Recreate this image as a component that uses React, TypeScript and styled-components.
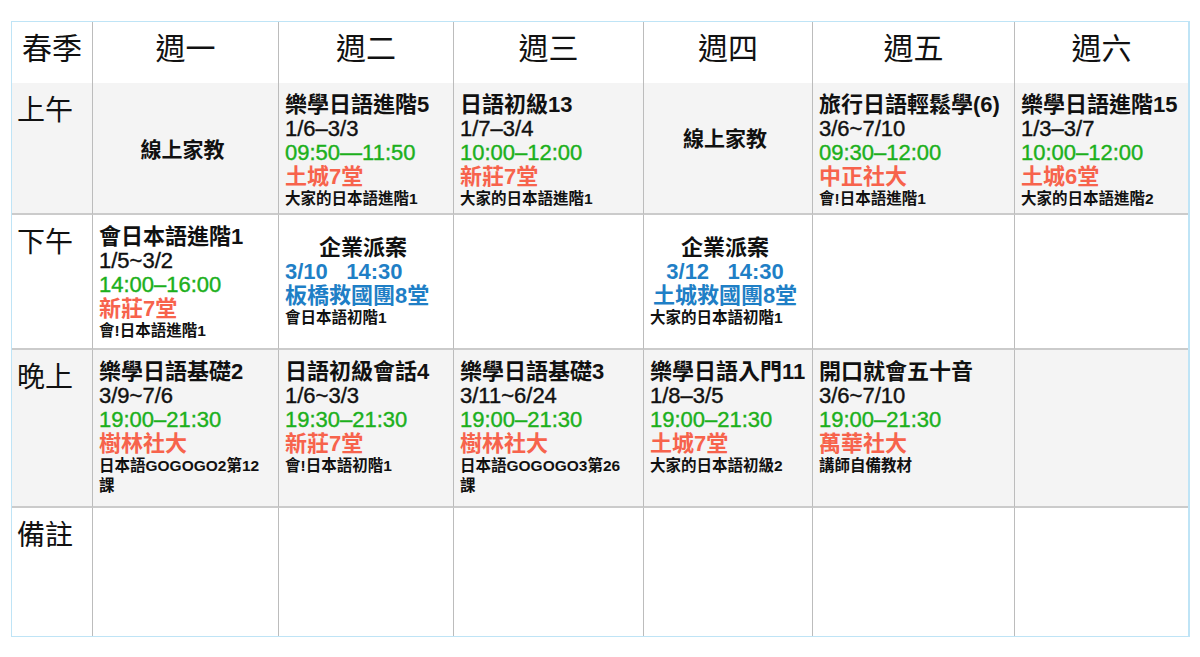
import styled, { createGlobalStyle } from "styled-components";

const GlobalStyle = createGlobalStyle`
  body {
    margin: 0;
    background: #fff;
    color: #111;
    font-family: "Liberation Sans", "Noto Sans CJK TC", sans-serif;
  }
`;

const Page = styled.div`
  padding: 21px 13px 0 11px;
`;

const Table = styled.table`
  table-layout: fixed;
  border-collapse: separate;
  border-spacing: 0;
  width: 1176px;
  border: 1px solid #bfe4f6;
  border-right-width: 2px;
`;

const Row = styled.tr<{ $shade?: boolean; $h: number }>`
  height: ${(p) => p.$h}px;
  background: ${(p) => (p.$shade ? "#f4f4f4" : "#fff")};
  &:last-child > * {
    border-bottom: 0;
  }
`;

const BaseCell = styled.td`
  padding: 0;
  border-right: 1px solid #bcbcbc;
  border-bottom: 2px solid #cbcbcb;
  &:last-child {
    border-right: 0;
  }
`;

const HeadCell = styled(BaseCell).attrs({ as: "th" })`
  font-size: 30px;
  line-height: 36px;
  font-weight: 400;
  text-align: center;
  vertical-align: middle;
  padding-bottom: 8px;
`;

const LabelCell = styled(BaseCell)`
  font-size: 28px;
  line-height: 36px;
  vertical-align: top;
  padding: 10px 0 0 5px;
`;

const Cell = styled(BaseCell)<{ $middle?: boolean; $lift?: number }>`
  vertical-align: ${(p) => (p.$middle ? "middle" : "top")};
  padding: ${(p) => (p.$middle ? `0 12px ${p.$lift ?? 0}px 6px` : "10px 12px 0 6px")};
`;

const Line = styled.div<{ $tone?: "green" | "red" | "blue"; $center?: boolean }>`
  font-size: 22px;
  line-height: 24px;
  font-weight: 600;
  white-space: pre;
  text-align: ${(p) => (p.$center ? "center" : "left")};
  color: ${(p) =>
    p.$tone === "green"
      ? "#1cb01c"
      : p.$tone === "red"
      ? "#f7634c"
      : p.$tone === "blue"
      ? "#1f7fc6"
      : "#111"};
`;

const Plain = styled(Line)`
  font-weight: 400;
  -webkit-text-stroke: 0.4px currentColor;
`;

const Book = styled.div`
  font-size: 15.5px;
  line-height: 20px;
  font-weight: 600;
`;

const Online = styled.div`
  font-size: 21px;
  font-weight: 600;
  text-align: center;
`;

type Course = {
  kind: "course";
  title: string;
  dates: string;
  time: string;
  place: string;
  book: string;
};
type Dispatch = {
  kind: "dispatch";
  when: string;
  place: string;
  book: string;
  center?: boolean;
};
type Online = { kind: "online"; lift?: number };
type Slot = Course | Dispatch | Online | null;

const days = ["週一", "週二", "週三", "週四", "週五", "週六"];
const widths = [81, 186, 175, 190, 169, 202, 173];

const rows: { label: string; shade: boolean; h: number; slots: Slot[] }[] = [
  {
    label: "上午",
    shade: true,
    h: 132,
    slots: [
      { kind: "online" },
      { kind: "course", title: "樂學日語進階5", dates: "1/6–3/3", time: "09:50—11:50", place: "土城7堂", book: "大家的日本語進階1" },
      { kind: "course", title: "日語初級13", dates: "1/7–3/4", time: "10:00–12:00", place: "新莊7堂", book: "大家的日本語進階1" },
      { kind: "online", lift: 22 },
      { kind: "course", title: "旅行日語輕鬆學(6)", dates: "3/6~7/10", time: "09:30–12:00", place: "中正社大", book: "會!日本語進階1" },
      { kind: "course", title: "樂學日語進階15", dates: "1/3–3/7", time: "10:00–12:00", place: "土城6堂", book: "大家的日本語進階2" },
    ],
  },
  {
    label: "下午",
    shade: false,
    h: 135,
    slots: [
      { kind: "course", title: "會日本語進階1", dates: "1/5~3/2", time: "14:00–16:00", place: "新莊7堂", book: "會!日本語進階1" },
      { kind: "dispatch", when: "3/10   14:30", place: "板橋救國團8堂", book: "會日本語初階1" },
      null,
      { kind: "dispatch", when: "3/12   14:30", place: "土城救國團8堂", book: "大家的日本語初階1", center: true },
      null,
      null,
    ],
  },
  {
    label: "晚上",
    shade: true,
    h: 158,
    slots: [
      { kind: "course", title: "樂學日語基礎2", dates: "3/9~7/6", time: "19:00–21:30", place: "樹林社大", book: "日本語GOGOGO2第12課" },
      { kind: "course", title: "日語初級會話4", dates: "1/6~3/3", time: "19:30–21:30", place: "新莊7堂", book: "會!日本語初階1" },
      { kind: "course", title: "樂學日語基礎3", dates: "3/11~6/24", time: "19:00–21:30", place: "樹林社大", book: "日本語GOGOGO3第26課" },
      { kind: "course", title: "樂學日語入門11", dates: "1/8–3/5", time: "19:00–21:30", place: "土城7堂", book: "大家的日本語初級2" },
      { kind: "course", title: "開口就會五十音", dates: "3/6~7/10", time: "19:00–21:30", place: "萬華社大", book: "講師自備教材" },
      null,
    ],
  },
  { label: "備註", shade: false, h: 128, slots: [null, null, null, null, null, null] },
];

function SlotCell({ slot }: { slot: Slot }) {
  if (!slot) return <Cell />;
  if (slot.kind === "online")
    return (
      <Cell $middle $lift={slot.lift}>
        <Online>線上家教</Online>
      </Cell>
    );
  if (slot.kind === "dispatch")
    return (
      <Cell $middle>
        <Line $center>企業派案</Line>
        <Line $tone="blue" $center={slot.center}>
          {slot.when}
        </Line>
        <Line $tone="blue" $center={slot.center}>
          {slot.place}
        </Line>
        <Book>{slot.book}</Book>
      </Cell>
    );
  return (
    <Cell>
      <Line>{slot.title}</Line>
      <Plain>{slot.dates}</Plain>
      <Plain $tone="green">{slot.time}</Plain>
      <Line $tone="red">{slot.place}</Line>
      <Book>{slot.book}</Book>
    </Cell>
  );
}

function App() {
  return (
    <Page>
      <GlobalStyle />
      <Table>
        <colgroup>
          {widths.map((w, i) => (
            <col key={i} style={{ width: w }} />
          ))}
        </colgroup>
        <thead>
          <Row $h={61}>
            <HeadCell>春季</HeadCell>
            {days.map((d) => (
              <HeadCell key={d}>{d}</HeadCell>
            ))}
          </Row>
        </thead>
        <tbody>
          {rows.map((r) => (
            <Row key={r.label} $shade={r.shade} $h={r.h}>
              <LabelCell>{r.label}</LabelCell>
              {r.slots.map((s, i) => (
                <SlotCell key={i} slot={s} />
              ))}
            </Row>
          ))}
        </tbody>
      </Table>
    </Page>
  );
}

export default App;
